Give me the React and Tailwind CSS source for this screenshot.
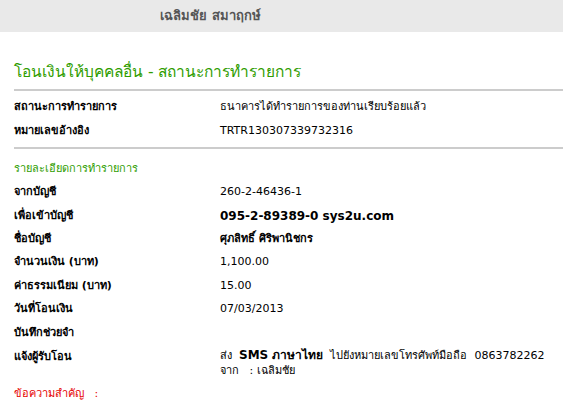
import React from 'react';

const rows = [
    { label: 'จากบัญชี', value: '260-2-46436-1' },
    { label: 'เพื่อเข้าบัญชี', value: '095-2-89389-0 sys2u.com', big: true },
    { label: 'ชื่อบัญชี', value: 'ศุภลิทธิ์ ศิริพานิชกร', bold: true },
    { label: 'จำนวนเงิน (บาท)', value: '1,100.00' },
    { label: 'ค่าธรรมเนียม (บาท)', value: '15.00' },
    { label: 'วันที่โอนเงิน', value: '07/03/2013' },
    { label: 'บันทึกช่วยจำ', value: '' },
];

const Row = ({ label, children }) => (
    <div className="flex items-center h-[23.4px]">
        <div className="w-[206px] font-bold">{label}</div>
        <div>{children}</div>
    </div>
);

const App = () => {
    return (
        <div className="w-[563px] h-[408px] overflow-hidden bg-white text-black text-[11px] font-['DejaVu_Sans','Tahoma',sans-serif]">
            <div className="h-8 bg-[#e9e9e9] flex items-center pl-[160px] text-[13px] font-bold text-[#555]">
                เฉลิมชัย สมาฤกษ์
            </div>

            <div className="pl-[14px]">
                <h1 className="pt-[28px] h-[57px] text-[15.5px] leading-[24px] text-[#2f9d00]">
                    โอนเงินให้บุคคลอื่น - สถานะการทำรายการ
                </h1>
                <div className="h-[2px] bg-[#cccccc]"></div>

                <div className="pt-[5px]">
                    <Row label="สถานะการทำรายการ">ธนาคารได้ทำรายการของท่านเรียบร้อยแล้ว</Row>
                    <Row label="หมายเลขอ้างอิง">TRTR130307339732316</Row>
                </div>
                <div className="mt-[4px] h-[2px] bg-[#cccccc]"></div>

                <div className="h-[32px] flex items-center pt-[8px] text-[#2f9d00]">รายละเอียดการทำรายการ</div>

                {rows.map((r) => (
                    <Row key={r.label} label={r.label}>
                        <span className={r.big ? 'font-bold text-[12px]' : r.bold ? 'font-bold' : ''}>{r.value}</span>
                    </Row>
                ))}

                <div className="flex pt-[3px]">
                    <div className="w-[206px] font-bold leading-[15px] pt-[1px]">แจ้งผู้รับโอน</div>
                    <div className="leading-[15px]">
                        <div>
                            ส่ง&nbsp;&nbsp;<span className="font-bold text-[12px]">SMS ภาษาไทย</span>&nbsp;&nbsp;ไปยังหมายเลขโทรศัพท์มือถือ&nbsp;&nbsp;0863782262
                        </div>
                        <div>จาก&nbsp;&nbsp;&nbsp;: เฉลิมชัย</div>
                    </div>
                </div>

                <div className="mt-[8px] text-[#e60000]">ข้อความสำคัญ&nbsp;&nbsp;&nbsp;:</div>
            </div>
        </div>
    );
};

export default App;
